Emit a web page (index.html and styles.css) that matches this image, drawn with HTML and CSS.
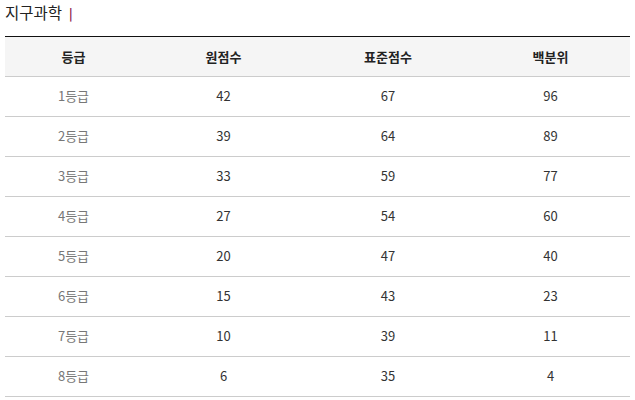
FILE: index.html
```html
<!DOCTYPE html>
<html lang="ko">
<head>
<meta charset="utf-8">
<link rel="stylesheet" href="styles.css">
</head>
<body>
<div class="wrap">
  <div class="title">지구과학<span class="bar">|</span></div>
  <table class="grade">
    <colgroup>
      <col class="c1"><col class="c2"><col class="c3"><col class="c4">
    </colgroup>
    <thead>
      <tr><th>등급</th><th>원점수</th><th>표준점수</th><th>백분위</th></tr>
    </thead>
    <tbody>
      <tr><td class="g">1등급</td><td>42</td><td>67</td><td>96</td></tr>
      <tr><td class="g">2등급</td><td>39</td><td>64</td><td>89</td></tr>
      <tr><td class="g">3등급</td><td>33</td><td>59</td><td>77</td></tr>
      <tr><td class="g">4등급</td><td>27</td><td>54</td><td>60</td></tr>
      <tr><td class="g">5등급</td><td>20</td><td>47</td><td>40</td></tr>
      <tr><td class="g">6등급</td><td>15</td><td>43</td><td>23</td></tr>
      <tr><td class="g">7등급</td><td>10</td><td>39</td><td>11</td></tr>
      <tr><td class="g">8등급</td><td>6</td><td>35</td><td>4</td></tr>
    </tbody>
  </table>
</div>
</body>
</html>
```
FILE: styles.css
```css
html, body {
  margin: 0;
  padding: 0;
  background: #fff;
}
body {
  font-family: "Noto Sans CJK KR", "Noto Sans", sans-serif;
  color: #333;
}
.wrap {
  padding: 0 5px;
}
.title {
  font-size: 15.5px;
  line-height: 25px;
  height: 25px;
  margin-bottom: 11px;
  color: #222;
}
.title .bar {
  color: #8a1a4a;
  font-size: 12px;
  font-weight: bold;
  margin-left: 7px;
  position: relative;
  top: -1px;
}
.grade {
  width: 625px;
  border-collapse: collapse;
  table-layout: fixed;
  border-top: 1px solid #111;
}
.c1 { width: 137px; }
.c2 { width: 163px; }
.c3 { width: 166px; }
.c4 { width: 159px; }
.grade th {
  background: #f5f5f5;
  font-size: 13px;
  font-weight: bold;
  color: #222;
  height: 38px;
  padding: 0 0 1px;
  text-align: center;
  border-bottom: 1px solid #ccc;
}
.grade td {
  font-size: 13px;
  color: #333;
  height: 37px;
  padding: 0 0 2px;
  text-align: center;
  border-bottom: 1px solid #ccc;
}
.grade td.g {
  color: #777;
}
```
